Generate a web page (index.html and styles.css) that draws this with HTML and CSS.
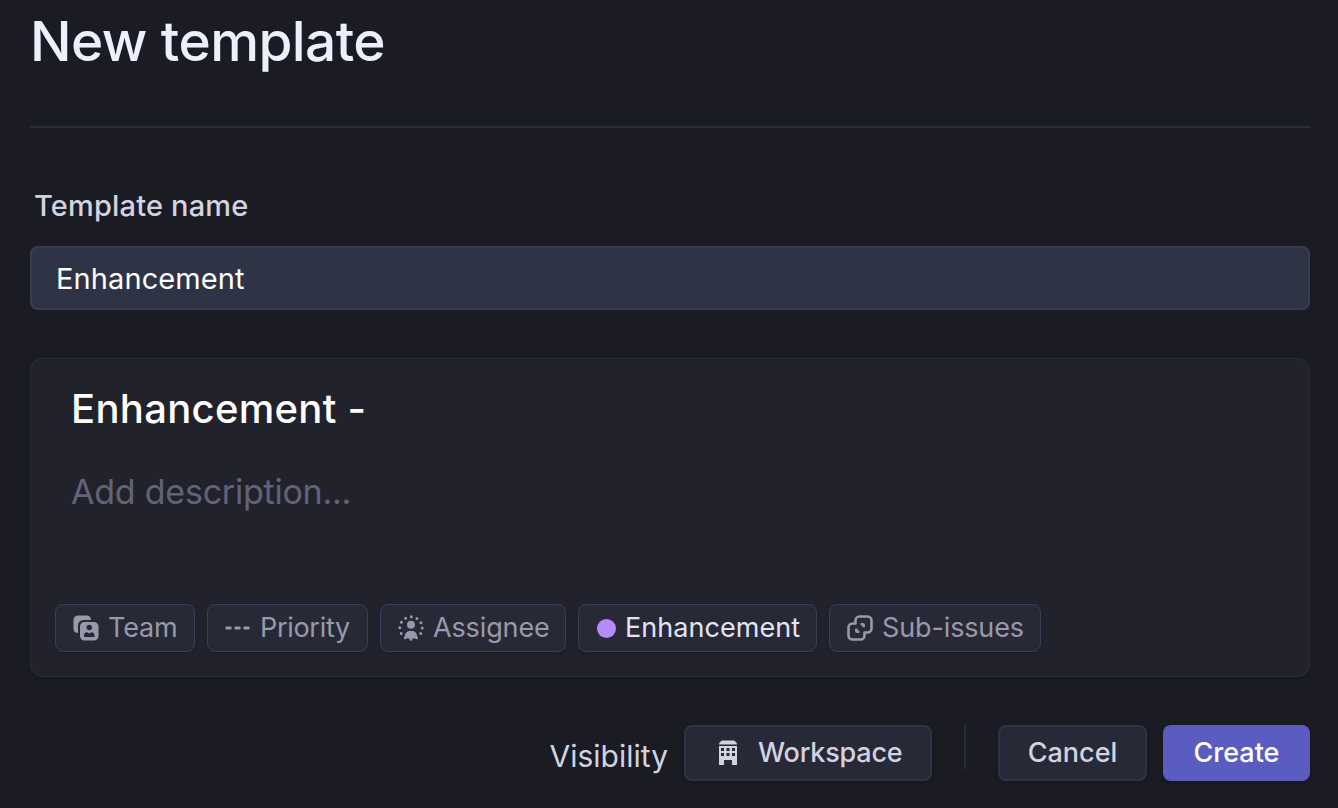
FILE: index.html
```html
<!DOCTYPE html>
<html lang="en">
<head><meta charset="utf-8"><title>New template</title><link rel="stylesheet" href="styles.css"></head>
<body>
<main class="page">
<h1 class="title">New template</h1>
<label class="label" for="name">Template name</label>
<input class="name" id="name" value="Enhancement">
<section class="card">
<h2 class="issue">Enhancement -</h2>
<p class="desc">Add description...</p>
<div class="chips">
<button class="chip team"><svg width="26" height="26" viewBox="0 0 26 26" fill="currentColor"><path d="M4.500 18A4.500 4.500 0 0 1 .5 13.500V5A4.500 4.500 0 0 1 5 .5h8.500A4.500 4.500 0 0 1 18 4.500V5h-7.500A5.500 5.500 0 0 0 5 10.500V18z"/><path fill-rule="evenodd" d="M11.500 7h9.500a4.500 4.500 0 0 1 4.500 4.500v9.500a4.500 4.500 0 0 1-4.500 4.500h-9.500A4.500 4.500 0 0 1 7 21v-9.500A4.500 4.500 0 0 1 11.500 7zM16.250 9.800a2.700 2.700 0 1 0 0 5.400 2.700 2.700 0 0 0 0-5.400zM11 20.500V22h10.500v-1.500c0-2-1.300-3.200-3-3.200-.9 0-1.200 1.100-2.250 1.100s-1.350-1.100-2.250-1.100c-1.700 0-3 1.200-3 3.200z"/></svg><span>Team</span></button>
<button class="chip priority"><svg width="26" height="26" viewBox="0 0 26 26" fill="currentColor"><rect x=".5" y="11.500" width="6" height="3" rx=".8"/><rect x="9.500" y="11.500" width="6" height="3" rx=".8"/><rect x="18.500" y="11.500" width="6" height="3" rx=".8"/></svg><span>Priority</span></button>
<button class="chip assignee"><svg width="26" height="26" viewBox="0 0 26 26" fill="currentColor"><circle cx="13" cy="13" r="11.200" fill="none" stroke="currentColor" stroke-width="3" stroke-linecap="round" stroke-dasharray="0 5.8643"/><circle cx="13" cy="9.700" r="4"/><path d="M6.800 22.300c0-4 2-6.300 5-6.300h2.400c3 0 5 2.300 5 6.300-4 2-8.400 2-12.400 0z"/></svg><span>Assignee</span></button>
<button class="chip enhancement"><i class="dot"></i><span>Enhancement</span></button>
<button class="chip sub"><svg width="26" height="26" viewBox="0 0 26 26" fill="none" stroke="currentColor" stroke-width="2.600" stroke-linejoin="round"><path d="M8.500 8.500V5.500a4 4 0 0 1 4-4h8a4 4 0 0 1 4 4v8a4 4 0 0 1-4 4h-3v3a4 4 0 0 1-4 4h-8a4 4 0 0 1-4-4v-8a4 4 0 0 1 4-4z"/><path d="M13.500 9.200h2.200q1 0 1 1v2M9.300 13.500v2.200q0 1 1 1h2.200"/></svg><span>Sub-issues</span></button>
</div>
</section>
<footer class="footer"><span class="vis">Visibility</span>
<button class="btn workspace"><svg width="20" height="26" viewBox="0 0 20 26" fill="currentColor"><path d="M4 .5h12q3 1.500 3 3.500v.5H1V4Q1 2 4 .5z"/><path fill-rule="evenodd" d="M1 6h18v19h-5v-5H6v5H1zM3 8v3h3V8zm5.500 0v3h3V8zM14 8v3h3V8zM3 13v3h3v-3zm5.500 0v3h3v-3zm5.500 0v3h3v-3z"/></svg><span>Workspace</span></button><i class="sep"></i><button class="btn cancel"><span>Cancel</span></button><button class="btn create"><span>Create</span></button></footer>
</main>
</body></html>
```
FILE: styles.css
```css
*{box-sizing:border-box;margin:0;padding:0}
body{background:#1b1b23;color:#d2d3e0;font-family:Inter,sans-serif;width:1338px;height:808px;overflow:hidden}
button,input{font:inherit;color:inherit;letter-spacing:inherit}
.page{display:flex;flex-direction:column;padding:0 28px 0 30px}
.title{height:128px;border-bottom:2px solid #2c2d3a;color:#eeeffc;font-size:55px;font-weight:500;line-height:83px;letter-spacing:-.6px;white-space:nowrap}
.label{height:118px;padding:60px 4px 0;font-size:29px;font-weight:500;line-height:36px;letter-spacing:.17px}
.name{height:64px;border:2px solid #3c3c50;border-radius:8px;background:#2e3446;color:#fff;font-size:29px;letter-spacing:.1px;padding:0 24px}
.card{height:319px;margin-top:48px;border:1px solid #2c2d3c;border-radius:12px;background:#22222d;padding:24px 24px;box-shadow:0 2px 4px rgba(0,0,0,.12)}
.issue{padding-left:16px;font-size:40px;font-weight:500;line-height:52px;letter-spacing:.3px;color:#fff}
.desc{margin-top:33px;padding-left:16px;font-size:34px;line-height:48px;letter-spacing:-.23px;color:#626376}
.chips{display:flex;gap:12px;margin-top:88px}
.chip{display:flex;align-items:center;height:48px;padding:0 0 0 17px;gap:9px;border:1px solid #3d3e55;border-radius:8px;background:#282937;color:#999aa9;font-size:27px;letter-spacing:-.13px;white-space:nowrap;box-shadow:0 2px 3px rgba(0,0,0,.15)}
.chip svg,.btn svg{flex:none}
.chip span,.btn span{padding-bottom:2px}
.team{width:140px}.priority{width:161px;letter-spacing:-.3px}.assignee{width:186px}.enhancement{width:239px;color:#e2e3f5;letter-spacing:.05px}.sub{width:212px}
.dot{flex:none;width:19px;height:19px;border-radius:50%;background:#b58bf8;margin-left:1px}
.footer{display:flex;justify-content:flex-end;margin-top:48px}
.vis{font-size:30px;line-height:62px;margin-right:16px}
.btn{display:flex;align-items:center;justify-content:center;height:56px;border:2px solid #323247;border-radius:8px;background:#282937;font-size:27px;font-weight:500;letter-spacing:0;white-space:nowrap;box-shadow:0 2px 4px rgba(0,0,0,.18)}
.workspace{width:248px;gap:20px;justify-content:flex-start;padding-left:32px;letter-spacing:-.2px}
.sep{width:2px;height:44px;background:#2c2d3a;margin:0 32px}
.cancel{width:149px}.create{width:147px;margin-left:16px;background:#5a5cc0;border:0;color:#fff}
```
